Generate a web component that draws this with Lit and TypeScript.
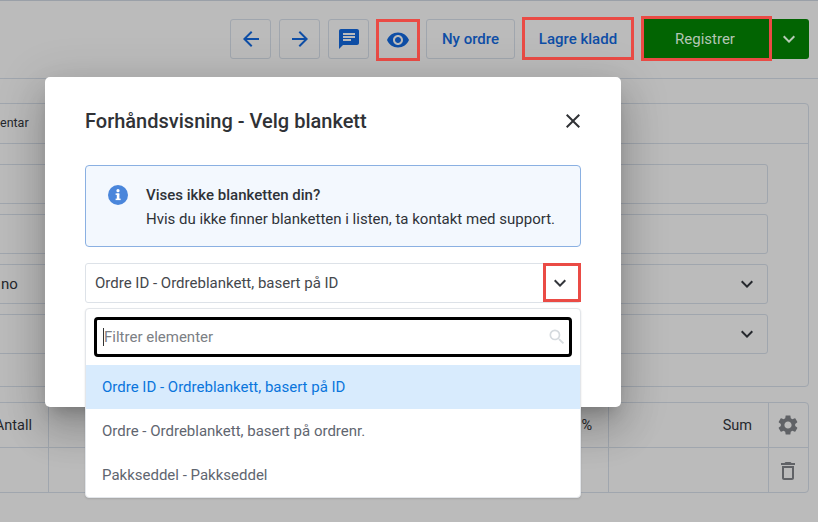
import { LitElement, html, css, svg } from "lit";
import { customElement } from "lit/decorators.js";

const icon = (d: string, size = 24) => html`<svg width=${size} height=${size} viewBox="0 0 24 24" fill="currentColor" aria-hidden="true">${svg`<path d=${d}></path>`}</svg>`;
const P = {
  back: "M20 11H7.83l5.59-5.59L12 4l-8 8 8 8 1.41-1.41L7.83 13H20v-2z",
  fwd: "M12 4l-1.41 1.41L16.17 11H4v2h12.17l-5.58 5.59L12 20l8-8z",
  chat: "M20 2H4c-1.1 0-1.99.9-1.99 2L2 22l4-4h14c1.1 0 2-.9 2-2V4c0-1.1-.9-2-2-2zM6 9h12v2H6V9zm8 5H6v-2h8v2zm4-6H6V6h12v2z",
  eye: "M12 4.5C7 4.5 2.73 7.61 1 12c1.73 4.39 6 7.5 11 7.5s9.27-3.11 11-7.5c-1.73-4.39-6-7.5-11-7.5zM12 17c-2.76 0-5-2.24-5-5s2.24-5 5-5 5 2.24 5 5-2.24 5-5 5zm0-8c-1.66 0-3 1.34-3 3s1.34 3 3 3 3-1.34 3-3-1.34-3-3-3z",
  chev: "M16.59 8.59L12 13.17 7.41 8.59 6 10l6 6 6-6z",
  close: "M19 6.41L17.59 5 12 10.59 6.41 5 5 6.41 10.59 12 5 17.59 6.41 19 12 13.41 17.59 19 19 17.59 13.41 12z",
  gear: "M19.14 12.94c.04-.3.06-.61.06-.94 0-.32-.02-.64-.07-.94l2.03-1.58c.18-.14.23-.41.12-.61l-1.92-3.32c-.12-.22-.37-.29-.59-.22l-2.39.96c-.5-.38-1.03-.7-1.62-.94l-.36-2.54c-.04-.24-.24-.41-.48-.41h-3.84c-.24 0-.43.17-.47.41l-.36 2.54c-.59.24-1.13.57-1.62.94l-2.39-.96c-.22-.08-.47 0-.59.22L2.74 8.87c-.12.21-.08.47.12.61l2.03 1.58c-.05.3-.09.63-.09.94s.02.64.07.94l-2.03 1.58c-.18.14-.23.41-.12.61l1.92 3.32c.12.22.37.29.59.22l2.39-.96c.5.38 1.03.7 1.62.94l.36 2.54c.05.24.24.41.48.41h3.84c.24 0 .44-.17.47-.41l.36-2.54c.59-.24 1.13-.56 1.62-.94l2.39.96c.22.08.47 0 .59-.22l1.92-3.32c.12-.22.07-.47-.12-.61l-2.01-1.58zM12 15.6c-1.98 0-3.6-1.62-3.6-3.6s1.62-3.6 3.6-3.6 3.6 1.62 3.6 3.6-1.62 3.6-3.6 3.6z",
  trash: "M6 19c0 1.1.9 2 2 2h8c1.1 0 2-.9 2-2V7H6v12zM8 9h8v10H8V9zm7.5-5l-1-1h-5l-1 1H5v2h14V4z",
  search: "M15.5 14h-.79l-.28-.27A6.47 6.47 0 0 0 16 9.5 6.5 6.5 0 1 0 9.5 16c1.61 0 3.09-.59 4.23-1.57l.27.28v.79l5 4.99L20.49 19l-4.99-5zm-6 0C7.01 14 5 11.99 5 9.5S7.01 5 9.5 5 14 7.01 14 9.5 11.99 14 9.5 14z",
};

@customElement("app-root")
export class AppRoot extends LitElement {
  static styles = css`
    :host { display: block; width: 818px; height: 522px; position: relative; overflow: hidden; background: #bbbbbb; font-family: Roboto, "Noto Sans", sans-serif; color: #25282d; }
    * { box-sizing: border-box; }
    .toolbar { height: 79px; border-top: 1px solid #9aa0a8; border-bottom: 1px solid #a0a6ae; display: flex; align-items: flex-start; justify-content: flex-end; padding: 15px 9px 0 0; }
    .btn { height: 40px; margin-top: 3px; display: flex; align-items: center; justify-content: center; border: 1px solid #a0a6ae; border-radius: 3px; color: #0e4ea6; font-size: 15px; font-weight: 500; }
    .sq { width: 41px; margin-right: 8px; }
    .chatb { margin-right: 7px; }
    .eye { width: 44px; height: 42px; margin-top: 3px; margin-right: 6px; border: 3px solid #ea4b45; border-radius: 0; }
    .ny { width: 89px; margin-right: 7px; }
    .lagre { width: 112px; height: 43px; margin-top: 1px; margin-right: 7px; border: 3px solid #ea4b45; border-radius: 0; }
    .reg { width: 131px; height: 45px; margin-top: 0; margin-right: -1px; padding-right: 3px; background: #026402; border: 3px solid #ea4b45; border-radius: 0; color: #b4c6b4; font-weight: 400; position: relative; }
    .regdrop { width: 38px; padding-right: 2px; background: #026402; border: none; border-radius: 0 3px 3px 0; color: #b8cbb8; }
    .main { margin: 24px 9px 0 -40px; }
    .panel { height: 284px; border: 1px solid #a0a6ae; border-radius: 4px; display: flex; flex-direction: column; }
    .tabs { height: 40px; border-bottom: 1px solid #a0a6ae; padding: 0 0 2px 39px; display: flex; align-items: center; font-size: 12.5px; }
    .fields { padding: 20px 40px 0 0; display: flex; flex-direction: column; gap: 10px; }
    .field { height: 40px; border: 1px solid #a0a6ae; border-radius: 3px; display: flex; align-items: center; justify-content: space-between; padding: 0 8px 0 39px; font-size: 15px; color: #25282d; }
    .table { margin-top: 15px; height: 91px; border: 1px solid #a0a6ae; border-radius: 4px; display: grid; grid-template-columns: 88px 560px 160px 1fr; grid-template-rows: 45px 45px; font-size: 14.5px; }
    .cell { border-right: 1px solid #a0a6ae; border-bottom: 1px solid #a0a6ae; display: flex; align-items: center; justify-content: flex-end; padding-right: 16px; }
    .cell.last { border-right: none; justify-content: center; padding: 0 1px 0 0; color: #606266; }
    .cell.b { border-bottom: none; }
    .modal { position: absolute; left: 45px; top: 77px; width: 576px; height: 330px; background: #fff; border-radius: 5px; padding: 0 40px; box-shadow: 0 11px 15px -7px rgba(0,0,0,.2), 0 24px 38px 3px rgba(0,0,0,.14), 0 9px 46px 8px rgba(0,0,0,.12); }
    .head { height: 88px; display: flex; align-items: center; justify-content: space-between; font-size: 20px; font-weight: 500; color: #303236; }
    .head svg { color: #303236; margin-right: -4px; }
    .info { height: 82px; background: #f3f8fe; border: 1px solid #8ab0e2; border-radius: 4px; display: flex; padding: 17px 22px; gap: 18px; font-size: 15px; line-height: 24px; color: #2e3238; }
    .info b { font-weight: 500; display: block; }
    .info .ic { width: 20px; height: 20px; flex: none; margin-top: 2px; }
    .sel { margin-top: 16px; height: 40px; border: 1px solid #dde2e8; border-radius: 3px; display: flex; align-items: center; justify-content: space-between; padding-left: 9px; font-size: 15px; color: #44474c; }
    .selbtn { width: 38px; height: 39px; margin: -1px -1px 0 0; padding-right: 4px; border: 3px solid #ea4b45; display: flex; align-items: center; justify-content: center; color: #33363b; }
    .drop { position: absolute; left: 85px; top: 308px; width: 496px; height: 190px; background: #fff; border: 1px solid #e3e6ea; border-radius: 4px; box-shadow: 0 1px 2px rgba(0,0,0,.12); padding-top: 8px; }
    .search { margin: 0 8px; height: 40px; border: 3px solid #000; border-radius: 4px; display: flex; align-items: center; justify-content: space-between; padding: 0 2px 0 6px; font-size: 15px; color: #7c8085; }
    .placeholder { border-left: 1px solid #333; line-height: 18px; }
    .search svg { color: #d5dade; }
    .list { margin-top: 8px; }
    .item { height: 44px; display: flex; align-items: center; padding-left: 16px; font-size: 15px; color: #5f6670; }
    .item.on { background: #d8ebfd; color: #0a75dc; }
  `;
  render() {
    return html`
      <div class="toolbar">
        <div class="btn sq">${icon(P.back)}</div>
        <div class="btn sq">${icon(P.fwd)}</div>
        <div class="btn sq chatb">${icon(P.chat)}</div>
        <div class="btn eye">${icon(P.eye)}</div>
        <div class="btn ny">Ny ordre</div>
        <div class="btn lagre">Lagre kladd</div>
        <div class="btn reg">Registrer</div>
        <div class="btn regdrop">${icon(P.chev)}</div>
      </div>
      <div class="main">
        <div class="panel">
          <div class="tabs">entar</div>
          <div class="fields">
            <div class="field"></div>
            <div class="field"></div>
            <div class="field"><span>no</span>${icon(P.chev)}</div>
            <div class="field"><span></span>${icon(P.chev)}</div>
          </div>
        </div>
        <div class="table">
          <div class="cell">Antall</div>
          <div class="cell">%</div>
          <div class="cell">Sum</div>
          <div class="cell last">${icon(P.gear)}</div>
          <div class="cell b"></div>
          <div class="cell b"></div>
          <div class="cell b"></div>
          <div class="cell last b">${icon(P.trash)}</div>
        </div>
      </div>
      <div class="modal">
        <div class="head"><span>Forhåndsvisning - Velg blankett</span>${icon(P.close)}</div>
        <div class="info">
          <svg class="ic" viewBox="0 0 20 20" aria-hidden="true"><circle cx="10" cy="10" r="10" fill="#4a86db"></circle><rect x="8.8" y="8.6" width="2.6" height="6.2" fill="#fff"></rect><rect x="7.6" y="8.4" width="3.6" height="1.5" fill="#fff"></rect><rect x="7.6" y="13.6" width="5" height="1.5" fill="#fff"></rect><circle cx="10" cy="5.7" r="1.6" fill="#fff"></circle></svg>
          <div><b>Vises ikke blanketten din?</b>Hvis du ikke finner blanketten i listen, ta kontakt med support.</div>
        </div>
        <div class="sel"><span>Ordre ID - Ordreblankett, basert på ID</span><div class="selbtn">${icon(P.chev)}</div></div>
      </div>
      <div class="drop">
        <div class="search"><span class="placeholder">Filtrer elementer</span>${icon(P.search, 20)}</div>
        <div class="list">
          <div class="item on">Ordre ID - Ordreblankett, basert på ID</div>
          <div class="item">Ordre - Ordreblankett, basert på ordrenr.</div>
          <div class="item">Pakkseddel - Pakkseddel</div>
        </div>
      </div>
    `;
  }
}
